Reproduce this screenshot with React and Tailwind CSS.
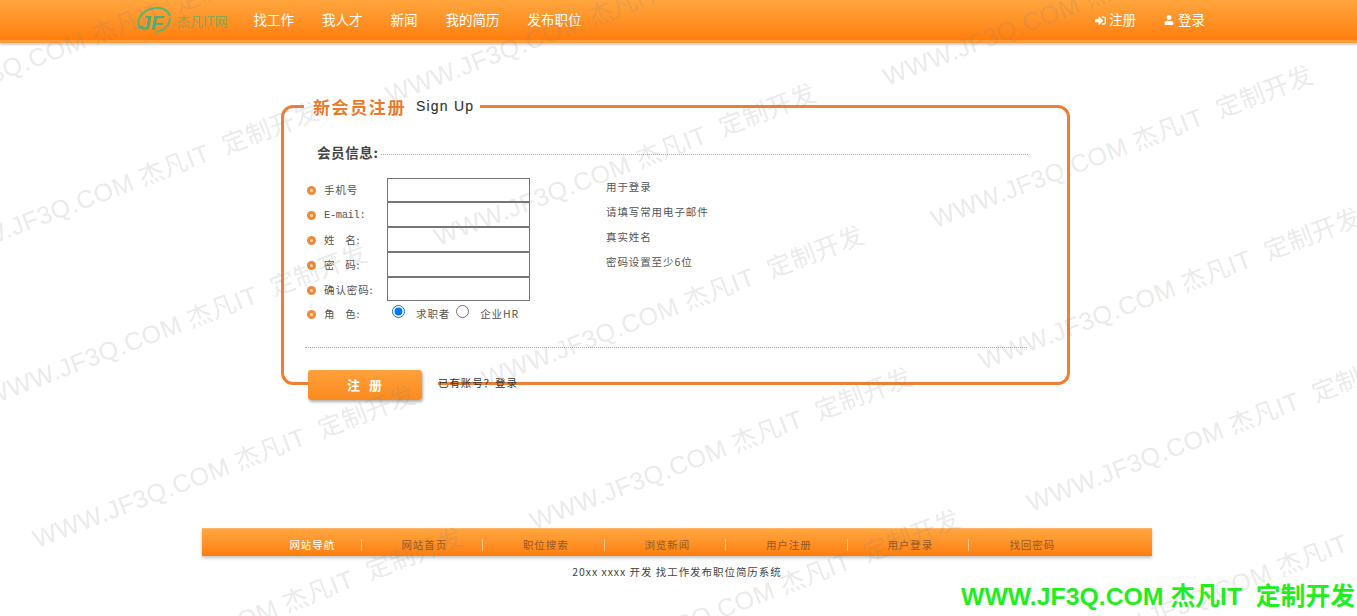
import React from 'react';
import { FaSignInAlt, FaUser } from 'react-icons/fa';

const cjk = '"Noto Sans CJK SC", "Liberation Sans", sans-serif';
const latinFirst = '"Liberation Sans", "Noto Sans CJK SC", sans-serif';
const nav = ['找工作', '我人才', '新闻', '我的简历', '发布职位'];
const rows = [
  ['手机号', '用于登录'],
  ['E-mail:', '请填写常用电子邮件'],
  ['姓\u00a0\u00a0\u00a0名:', '真实姓名'],
  ['密\u00a0\u00a0\u00a0码:', '密码设置至少6位'],
  ['确认密码:', ''],
];
const foot = ['网站导航', '网站首页', '职位搜索', '浏览新闻', '用户注册', '用户登录', '找回密码'];

const marks = [];
for (let i = -2; i <= 4; i++) {
  for (let j = -2; j <= 3; j++) {
    marks.push([625 + 48 * i + 497 * j, 165 + 142 * i - 18 * j]);
  }
}

function Bullet() {
  return (
    <span className="w-[9px] h-[9px] ml-[1px] rounded-full bg-[#ee8a3c] flex items-center justify-center shrink-0">
      <span className="w-[3px] h-[3px] rounded-full bg-[#ffd9a8]" />
    </span>
  );
}

function Logo() {
  return (
    <div className="flex items-center gap-[5px]">
      <svg width="37" height="30" viewBox="0 0 37 30" fill="none">
        <path d="M5 24C0 14 8 4 21 3c7-.5 13 3 14 8" stroke="#5fb56d" strokeWidth="2.2" />
        <path d="M35 13c0 7-6 13-15 14" stroke="#5fb56d" strokeWidth="2" />
        <text x="4" y="25" fontSize="21" fontWeight="700" fontStyle="italic" fill="#4fae78" fontFamily="Liberation Sans, sans-serif">JF</text>
      </svg>
      <span className="text-[13px] leading-none text-[#7da85a] opacity-90">杰凡IT网</span>
    </div>
  );
}

export default function App() {
  return (
    <div className="relative h-[616px] overflow-hidden bg-white text-[#444]" style={{ fontFamily: cjk }}>
      <header className="h-[40px] flex items-center pl-[135px] bg-gradient-to-b from-[#ffa63c] to-[#ff7e06] border-b-[3px] border-[#ff9a3a] shadow-[0_2px_2px_rgba(120,120,120,0.35)] box-content">
        <Logo />
        <nav className="flex gap-[28px] ml-[26px] text-white text-[13.5px] leading-none">
          {nav.map((n) => <span key={n}>{n}</span>)}
        </nav>
        <div className="flex gap-[28px] ml-auto mr-[152px] text-white text-[13.5px] leading-none">
          <span className="flex items-center gap-[3px]"><FaSignInAlt className="w-[11px] h-[11px]" />注册</span>
          <span className="flex items-center gap-[4px]"><FaUser className="w-[10px] h-[10px]" />登录</span>
        </div>
      </header>

      <main className="ml-[281px] mt-[62px] w-[789px] h-[280px] border-[3px] border-[#ee8033] rounded-[12px] relative pl-[24px]">
        <div className="absolute left-[20px] -top-[12px] bg-white flex items-center h-[20px] pl-[9px] pr-[6px]">
          <span className="text-[17px] font-bold tracking-[1.6px] text-[#ea7a2c] leading-none">新会员注册</span>
          <span className="ml-[10px] text-[14px] tracking-[1.2px] text-[#333] leading-none [-webkit-text-stroke:0.15px_#333]" style={{ fontFamily: '"Liberation Sans", sans-serif' }}>Sign Up</span>
        </div>

        <div className="flex items-center h-[20px] mt-[35px] pl-[9px] pr-[39px]">
          <span className="text-[13.5px] font-bold tracking-[0.6px] text-[#444] leading-none whitespace-nowrap">会员信息:</span>
          <span className="flex-1 ml-[3px] mt-[3px] border-t border-dotted border-[#aaa]" />
        </div>

        <div className="mt-[14px] text-[10.5px] tracking-[0.9px] text-[#555] leading-none">
          {rows.map(([label, hint], idx) => (
            <div key={idx} className="flex h-[25px] items-center -ml-[2px]">
              <span className="w-[81px] flex items-center gap-[8px] pt-[1px] whitespace-nowrap">
                <Bullet />
                <span style={idx === 1 ? { fontFamily: '"Liberation Mono", monospace', letterSpacing: '-0.4px' } : undefined}>{label}</span>
              </span>
              <input
                readOnly
                aria-label={label}
                className={`w-[143px] border border-[#767676] bg-white ${idx === 0 ? 'h-[24px] mt-[1px]' : idx === 4 ? 'h-[24px] mb-[1px]' : 'h-[25px]'}`}
              />
              <span className="ml-[76px] -mt-[4px] text-[#555]">{hint}</span>
            </div>
          ))}
          <div className="flex h-[25px] items-center -ml-[2px]">
            <span className="w-[81px] flex items-center gap-[8px] whitespace-nowrap">
              <Bullet />
              <span>{'角\u00a0\u00a0\u00a0色:'}</span>
            </span>
            <input type="radio" name="role" defaultChecked aria-label="求职者" className="ml-[5px] -mt-[7px] w-[13px] h-[13px]" />
            <span className="ml-[11px] -mt-[1px]">求职者</span>
            <input type="radio" name="role" aria-label="企业HR" className="ml-[6px] -mt-[7px] w-[13px] h-[13px]" />
            <span className="ml-[11px] -mt-[1px]">企业HR</span>
          </div>
        </div>

        <div className="mt-[20px] mr-[40px] -ml-[3px] border-t border-dotted border-[#aaa]" />

        <div className="absolute left-[24px] top-[262px] flex items-center">
          <div className="bg-white pr-[16px]">
            <button className="w-[114px] h-[30px] rounded-[3px] bg-gradient-to-b from-[#ffa03a] to-[#fb8a1c] shadow-[1px_2px_3px_rgba(120,120,120,0.6)] text-white font-bold text-[13px] tracking-[1px]">
              注&nbsp;&nbsp;册
            </button>
          </div>
          <span className="text-[10.5px] tracking-[0.9px] text-[#333] -mt-[4px] whitespace-nowrap">已有账号？登录</span>
        </div>
      </main>

      <footer className="mt-[143px] ml-[202px] w-[950px]">
        <div className="h-[28px] flex items-center pl-[38px] pt-[4px] bg-gradient-to-b from-[#ffa63c] to-[#ff7e06] border-t border-[#ffb468] shadow-[0_2px_3px_rgba(120,120,120,0.45)] text-[10.5px] tracking-[0.9px] text-[#925a24]">
          {foot.map((f, i) => (
            <span key={f} className={`w-[121.5px] h-[12px] leading-[12px] text-center shrink-0 ${i < 6 ? 'border-r border-[#ffc98c]' : ''} ${i === 0 ? 'text-white pl-[24px]' : 'pl-[5px]'}`}>{f}</span>
          ))}
        </div>
        <p className="mt-[9px] text-center text-[10.5px] tracking-[0.95px] leading-[14px] text-[#444]">20xx xxxx 开发 找工作发布职位简历系统</p>
      </footer>

      <div className="absolute inset-0 overflow-hidden pointer-events-none" aria-hidden="true">
        {marks.map(([x, y], k) => (
          <span
            key={k}
            className="absolute whitespace-nowrap text-[25px] tracking-[0.5px] leading-none text-[rgba(130,130,130,0.18)] -translate-x-1/2 -translate-y-1/2 -rotate-[21deg]"
            style={{ left: x, top: y, fontFamily: latinFirst }}
          >
            WWW.JF3Q.COM 杰凡IT&nbsp;&nbsp;定制开发
          </span>
        ))}
      </div>

      <div className="absolute right-[2px] bottom-[6px] text-[24.8px] leading-none font-bold text-[#1fee1f] whitespace-nowrap" style={{ fontFamily: latinFirst }}>
        WWW.JF3Q.COM 杰凡IT&nbsp;&nbsp;定制开发
      </div>
    </div>
  );
}
